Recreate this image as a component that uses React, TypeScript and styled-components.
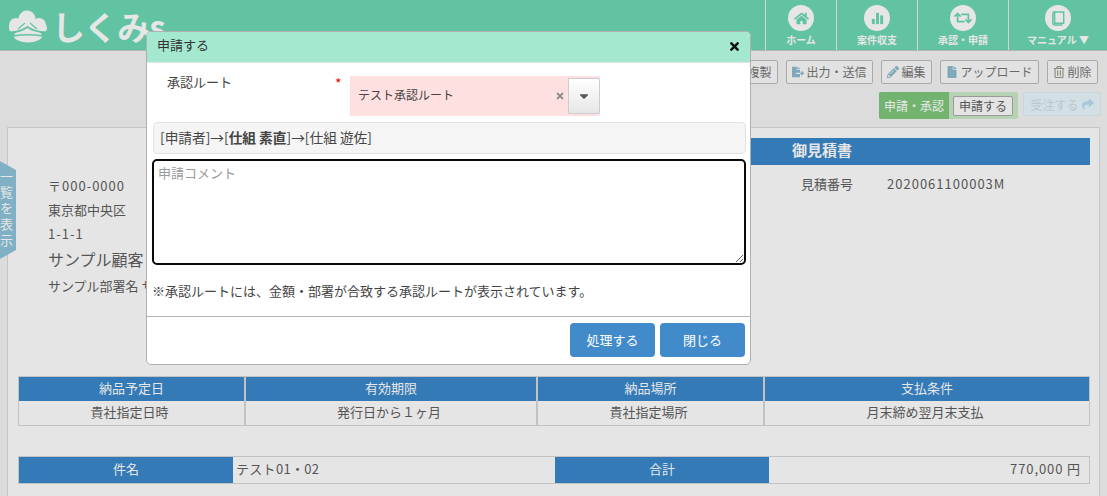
import styled, { createGlobalStyle } from 'styled-components';
import { FaHome, FaRetweet, FaFileExport, FaPencilAlt, FaFile, FaRegTrashAlt, FaShare, FaTimes, FaCaretDown } from 'react-icons/fa';

const GlobalStyle = createGlobalStyle`
  html, body {
    margin: 0;
    height: 100%;
    overflow: hidden;
  }
  body {
    background: #dcdcdc;
    color: #555;
    font-family: "Noto Sans CJK JP", "Noto Sans", sans-serif;
    font-size: 13px;
  }
  * { box-sizing: border-box; }
`;

const Page = styled.div`
  position: relative;
  width: 1107px;
  height: 496px;
  overflow: hidden;
`;

const Header = styled.header`
  display: flex;
  justify-content: space-between;
  height: 51px;
  background: #62c3a2;
  border-bottom: 1px solid #b4b4b4;
`;

const Logo = styled.div`
  display: flex;
  align-items: center;
  gap: 4px;
  padding: 2px 0 0 8px;
  color: #e6e6e6;
  font-size: 33px;
  font-weight: 700;
  line-height: 48px;
  letter-spacing: -1px;
`;

const Nav = styled.nav`
  display: flex;
`;

const NavItem = styled.div<{ $width: number }>`
  display: flex;
  flex-direction: column;
  align-items: center;
  width: ${(p) => p.$width}px;
  padding-top: 5px;
  border-left: 1px solid #d5d5d5;
  color: #e6e6e6;
  font-size: 10px;
  font-weight: 700;
  line-height: 14px;
`;

const NavCircle = styled.span`
  display: flex;
  align-items: center;
  justify-content: center;
  width: 26px;
  height: 26px;
  margin-bottom: 2px;
  border-radius: 50%;
  background: #e6e6e6;
  color: #62c3a2;
  font-size: 15px;
`;

const Toolbar = styled.div`
  display: flex;
  flex-direction: column;
  align-items: flex-end;
  gap: 8px;
  height: 76px;
  padding: 9px 9px 0 0;
`;

const ToolRow = styled.div`
  display: flex;
  gap: 8px;
`;

const ToolButton = styled.button`
  display: flex;
  align-items: center;
  gap: 2px;
  height: 24px;
  padding: 0 5.5px;
  border: 1px solid #a9a9a9;
  border-radius: 2px;
  background: #e2e2e2;
  color: #6a6a6a;
  font: inherit;
  font-size: 12px;
  line-height: 1;
  white-space: nowrap;
`;

const ToolIcon = styled.span<{ $color: string }>`
  display: flex;
  justify-content: center;
  width: 12px;
  color: ${(p) => p.$color};
  font-size: 12px;
`;

const FlowRow = styled.div`
  display: flex;
  align-items: flex-start;
  gap: 5px;
  margin-right: -3px;
`;

const FlowGroup = styled.div`
  display: flex;
  align-items: center;
  width: 139px;
  height: 27px;
  border-radius: 2px;
  background: #b5d2b2;
  overflow: hidden;
`;

const FlowLabel = styled.span`
  display: flex;
  align-items: center;
  justify-content: center;
  width: 70px;
  height: 100%;
  background: #72b46f;
  color: #e8e8e8;
  font-size: 12px;
`;

const FlowButton = styled.button`
  width: 60px;
  height: 20px;
  margin-left: 4px;
  padding: 0;
  border: 1px solid #9a9a9a;
  border-radius: 2px;
  background: #e4e4e4;
  color: #555;
  font: inherit;
  font-size: 12px;
  line-height: 1;
`;

const OrderButton = styled.button`
  display: flex;
  align-items: center;
  justify-content: center;
  gap: 3px;
  width: 78px;
  height: 24px;
  padding: 0;
  border: 1px solid #c8d6dc;
  border-radius: 2px;
  background: #d2e0e6;
  color: #b8c6cc;
  font: inherit;
  font-size: 12px;

  svg {
    color: #a8c6d8;
  }
`;

const Sheet = styled.main`
  height: 380px;
  margin: 0 7px;
  padding: 10px 10px 0;
  border: 1px solid #c6c6c6;
  border-bottom: 0;
  background: #e5e5e5;
`;

const SheetTop = styled.div`
  display: grid;
  grid-template-columns: 536px 536px;
  height: 238px;
`;

const Address = styled.div`
  padding: 36px 0 0 30px;
`;

const AddressLine = styled.div<{ $digits?: boolean }>`
  height: 24px;
  line-height: 24px;
  letter-spacing: ${(p) => (p.$digits ? '1px' : '0')};
  white-space: nowrap;
`;

const CustomerName = styled.div`
  height: 28px;
  font-size: 16px;
  line-height: 27px;
`;

const SheetTitle = styled.h1`
  margin: 0;
  height: 27px;
  background: #337ab7;
  color: #e6e6e6;
  font-size: 15px;
  font-weight: 700;
  line-height: 23px;
  text-align: center;
`;

const QuoteRow = styled.div`
  display: flex;
  gap: 34px;
  padding: 10px 0 0 247px;
  line-height: 18px;
`;

const QuoteNumber = styled.span`
  letter-spacing: 1px;
`;

const InfoTable = styled.table`
  width: 1072px;
  table-layout: fixed;
  border-collapse: separate;
  border-spacing: 0;
  text-align: center;
`;

const HeadCell = styled.th<{ $width?: number }>`
  width: ${(p) => (p.$width ? `${p.$width}px` : 'auto')};
  height: 25px;
  padding: 0 0 3px;
  border: 1px solid #c2c2c2;
  border-bottom: 0;
  background: #337ab7;
  color: #e6e6e6;
  font-weight: 400;
`;

const BodyCell = styled.td`
  height: 25px;
  padding: 0 4px 3px 0;
  border: 1px solid #c2c2c2;
  border-top: 0;
`;

const SummaryTable = styled.div`
  display: grid;
  grid-template-columns: 214px 322px 214px 1fr;
  align-items: center;
  width: 1072px;
  height: 28px;
  margin-top: 30px;
  border: 1px solid #c2c2c2;
  line-height: 24px;
`;

const SummaryHead = styled.div`
  height: 26px;
  background: #337ab7;
  color: #e6e6e6;
  text-align: center;
`;

const SummaryValue = styled.div<{ $right?: boolean }>`
  padding: 0 ${(p) => (p.$right ? '8px' : '3px')} 2px;
  letter-spacing: ${(p) => (p.$right ? '0.9px' : '0.3px')};
  text-align: ${(p) => (p.$right ? 'right' : 'left')};
`;

const SideTab = styled.div`
  position: absolute;
  top: 161px;
  left: 0;
  display: flex;
  align-items: center;
  justify-content: center;
  width: 16px;
  height: 98px;
  padding-right: 3px;
  background: #7fb0c5;
  clip-path: polygon(0 0, 100% 9px, 100% calc(100% - 9px), 0 100%);
  color: #e6e6e6;
  font-size: 13px;
  line-height: 13px;
  writing-mode: vertical-rl;
  letter-spacing: 3px;
`;

const Modal = styled.section`
  position: absolute;
  top: 31px;
  left: 146px;
  display: flex;
  flex-direction: column;
  width: 605px;
  height: 334px;
  border: 1px solid #b0b0b0;
  border-radius: 5px;
  background: #fff;
  overflow: hidden;
  color: #444;
`;

const ModalHeader = styled.div`
  display: flex;
  align-items: center;
  justify-content: space-between;
  height: 31px;
  padding: 0 9px 5px 10px;
  border-bottom: 1px solid #e5e5e5;
  background: #a5e8d0;
  color: #333;
`;

const CloseIcon = styled(FaTimes)`
  margin-top: 3px;
  color: #111;
  font-size: 13px;
`;

const RouteField = styled.div`
  display: grid;
  grid-template-columns: 168px 15px 250px;
  padding: 13px 0 0 20px;
`;

const FieldLabel = styled.label`
  margin-top: -2px;
  line-height: 16px;
`;

const Required = styled.span`
  color: #f00;
  font-size: 14px;
  line-height: 14px;
`;

const RouteSelect = styled.div`
  display: flex;
  align-items: center;
  justify-content: space-between;
  height: 40px;
  padding-left: 8px;
  background: #ffe0e0;
  font-size: 12px;
  line-height: 36px;
`;

const RouteName = styled.span`
  margin-top: -2px;
`;

const SelectEnd = styled.div`
  display: flex;
  align-items: center;
  gap: 3px;
  color: #888;
`;

const ClearIcon = styled(FaTimes)`
  font-size: 10px;
`;

const SelectArrow = styled.span`
  display: flex;
  align-items: center;
  justify-content: center;
  width: 32px;
  height: 36px;
  border: 1px solid #ccc;
  border-radius: 0 2px 2px 0;
  background: linear-gradient(#fff, #e6e6e6);
  color: #555;
  font-size: 14px;
`;

const RouteFlow = styled.div`
  height: 32px;
  margin: 6px 4px 0 6px;
  padding-left: 6px;
  border: 1px solid #e3e3e3;
  border-radius: 4px;
  background: #f5f5f5;
  font-size: 13.7px;
  line-height: 28px;
`;

const CommentBox = styled.textarea`
  display: block;
  width: 594px;
  height: 106px;
  margin: 5px 0 0 5px;
  padding: 3px 4px;
  border: 2px solid #0a0a0a;
  border-radius: 5px;
  outline: 0;
  font: inherit;
  line-height: 18px;

  &::placeholder {
    color: #9a9a9a;
  }
`;

const Note = styled.p`
  height: 52px;
  margin: 0;
  padding: 17px 0 0 5px;
  line-height: 18px;
  border-bottom: 1px solid #b5b5b5;
`;

const ModalFooter = styled.div`
  display: flex;
  justify-content: flex-end;
  gap: 5px;
  padding: 6px 5px 0 0;
`;

const ModalButton = styled.button`
  width: 85px;
  height: 34px;
  padding: 0 0 2px;
  border: 0;
  border-radius: 4px;
  background: #428bca;
  color: #fff;
  font: inherit;
`;

const CloudLogo = () => (
  <svg width="40" height="33" viewBox="0 0 40 33">
    <g fill="#e6e6e6">
      <circle cx="19" cy="9" r="8.5" />
      <circle cx="8" cy="15" r="7" />
      <circle cx="31" cy="15" r="7" />
      <rect x="1" y="14" width="38" height="8" rx="4" />
      <ellipse cx="20" cy="26" rx="14" ry="6.5" />
    </g>
    <path d="M2 22.5 C10 22 14 21 19.5 17 C25 21 30 22 38 22.5" fill="none" stroke="#62c3a2" strokeWidth="1.8" />
    <path d="M5 26 C14 24.5 26 24.5 35 26" fill="none" stroke="#62c3a2" strokeWidth="1.4" />
    <path d="M10 19 L17 13 M29 19 L22 13" fill="none" stroke="#62c3a2" strokeWidth="1.2" />
  </svg>
);

const StatsIcon = () => (
  <svg width="13" height="13" viewBox="0 0 15 15" fill="currentColor">
    <rect x="1" y="8" width="3.4" height="6" />
    <rect x="5.8" y="1" width="3.4" height="13" />
    <rect x="10.6" y="4" width="3.4" height="10" />
  </svg>
);

const BookIcon = () => (
  <svg width="13" height="15" viewBox="0 0 15 17" fill="none" stroke="currentColor" strokeWidth="1.7">
    <path d="M3 1h10.5v13H3z" />
    <path d="M3 1C1.5 1 1 2 1 3v11.5C1 15.5 2 16 3 16h9" />
  </svg>
);

const navItems = [
  { label: 'ホーム', width: 71, icon: <FaHome /> },
  { label: '案件収支', width: 81, icon: <StatsIcon /> },
  { label: '承認・申請', width: 91, icon: <FaRetweet size={18} /> },
  { label: 'マニュアル ▼', width: 99, icon: <BookIcon /> },
];

const toolItems = [
  { label: '複製', icon: null, color: '#7fa8b8' },
  { label: '出力・送信', icon: <FaFileExport />, color: '#7fa8b8' },
  { label: '編集', icon: <FaPencilAlt />, color: '#7fa8b8' },
  { label: 'アップロード', icon: <FaFile />, color: '#7fa8b8' },
  { label: '削除', icon: <FaRegTrashAlt />, color: '#8a8a7a' },
];

const termColumns = [
  { title: '納品予定日', value: '貴社指定日時', width: 227 },
  { title: '有効期限', value: '発行日から１ヶ月', width: 292 },
  { title: '納品場所', value: '貴社指定場所', width: 227 },
  { title: '支払条件', value: '月末締め翌月末支払' },
];

const App = () => (
  <Page>
    <GlobalStyle />
    <Header>
      <Logo>
        <CloudLogo />
        <span>しくみs</span>
      </Logo>
      <Nav>
        {navItems.map((item) => (
          <NavItem key={item.label} $width={item.width}>
            <NavCircle>{item.icon}</NavCircle>
            {item.label}
          </NavItem>
        ))}
      </Nav>
    </Header>

    <Toolbar>
      <ToolRow>
        {toolItems.map((item) => (
          <ToolButton key={item.label}>
            {item.icon && <ToolIcon $color={item.color}>{item.icon}</ToolIcon>}
            {item.label}
          </ToolButton>
        ))}
      </ToolRow>
      <FlowRow>
        <FlowGroup>
          <FlowLabel>申請・承認</FlowLabel>
          <FlowButton>申請する</FlowButton>
        </FlowGroup>
        <OrderButton>
          受注する
          <FaShare />
        </OrderButton>
      </FlowRow>
    </Toolbar>

    <Sheet>
      <SheetTop>
        <Address>
          <AddressLine $digits>〒000-0000</AddressLine>
          <AddressLine>東京都中央区</AddressLine>
          <AddressLine $digits>1-1-1</AddressLine>
          <CustomerName>サンプル顧客</CustomerName>
          <AddressLine>サンプル部署名 サンプル担当者</AddressLine>
        </Address>
        <div>
          <SheetTitle>御見積書</SheetTitle>
          <QuoteRow>
            <span>見積番号</span>
            <QuoteNumber>2020061100003M</QuoteNumber>
          </QuoteRow>
        </div>
      </SheetTop>

      <InfoTable>
        <thead>
          <tr>
            {termColumns.map((col) => (
              <HeadCell key={col.title} $width={col.width}>{col.title}</HeadCell>
            ))}
          </tr>
        </thead>
        <tbody>
          <tr>
            {termColumns.map((col) => (
              <BodyCell key={col.title}>{col.value}</BodyCell>
            ))}
          </tr>
        </tbody>
      </InfoTable>

      <SummaryTable>
        <SummaryHead>件名</SummaryHead>
        <SummaryValue>テスト01・02</SummaryValue>
        <SummaryHead>合計</SummaryHead>
        <SummaryValue $right>770,000 円</SummaryValue>
      </SummaryTable>
    </Sheet>

    <SideTab>一覧を表示</SideTab>

    <Modal>
      <ModalHeader>
        申請する
        <CloseIcon />
      </ModalHeader>
      <RouteField>
        <FieldLabel>承認ルート</FieldLabel>
        <Required>*</Required>
        <RouteSelect>
          <RouteName>テスト承認ルート</RouteName>
          <SelectEnd>
            <ClearIcon />
            <SelectArrow><FaCaretDown /></SelectArrow>
          </SelectEnd>
        </RouteSelect>
      </RouteField>
      <RouteFlow>
        [申請者]→[<b>仕組 素直</b>]→[仕組 遊佐]
      </RouteFlow>
      <CommentBox placeholder="申請コメント" />
      <Note>※承認ルートには、金額・部署が合致する承認ルートが表示されています。</Note>
      <ModalFooter>
        <ModalButton>処理する</ModalButton>
        <ModalButton>閉じる</ModalButton>
      </ModalFooter>
    </Modal>
  </Page>
);

export default App;
